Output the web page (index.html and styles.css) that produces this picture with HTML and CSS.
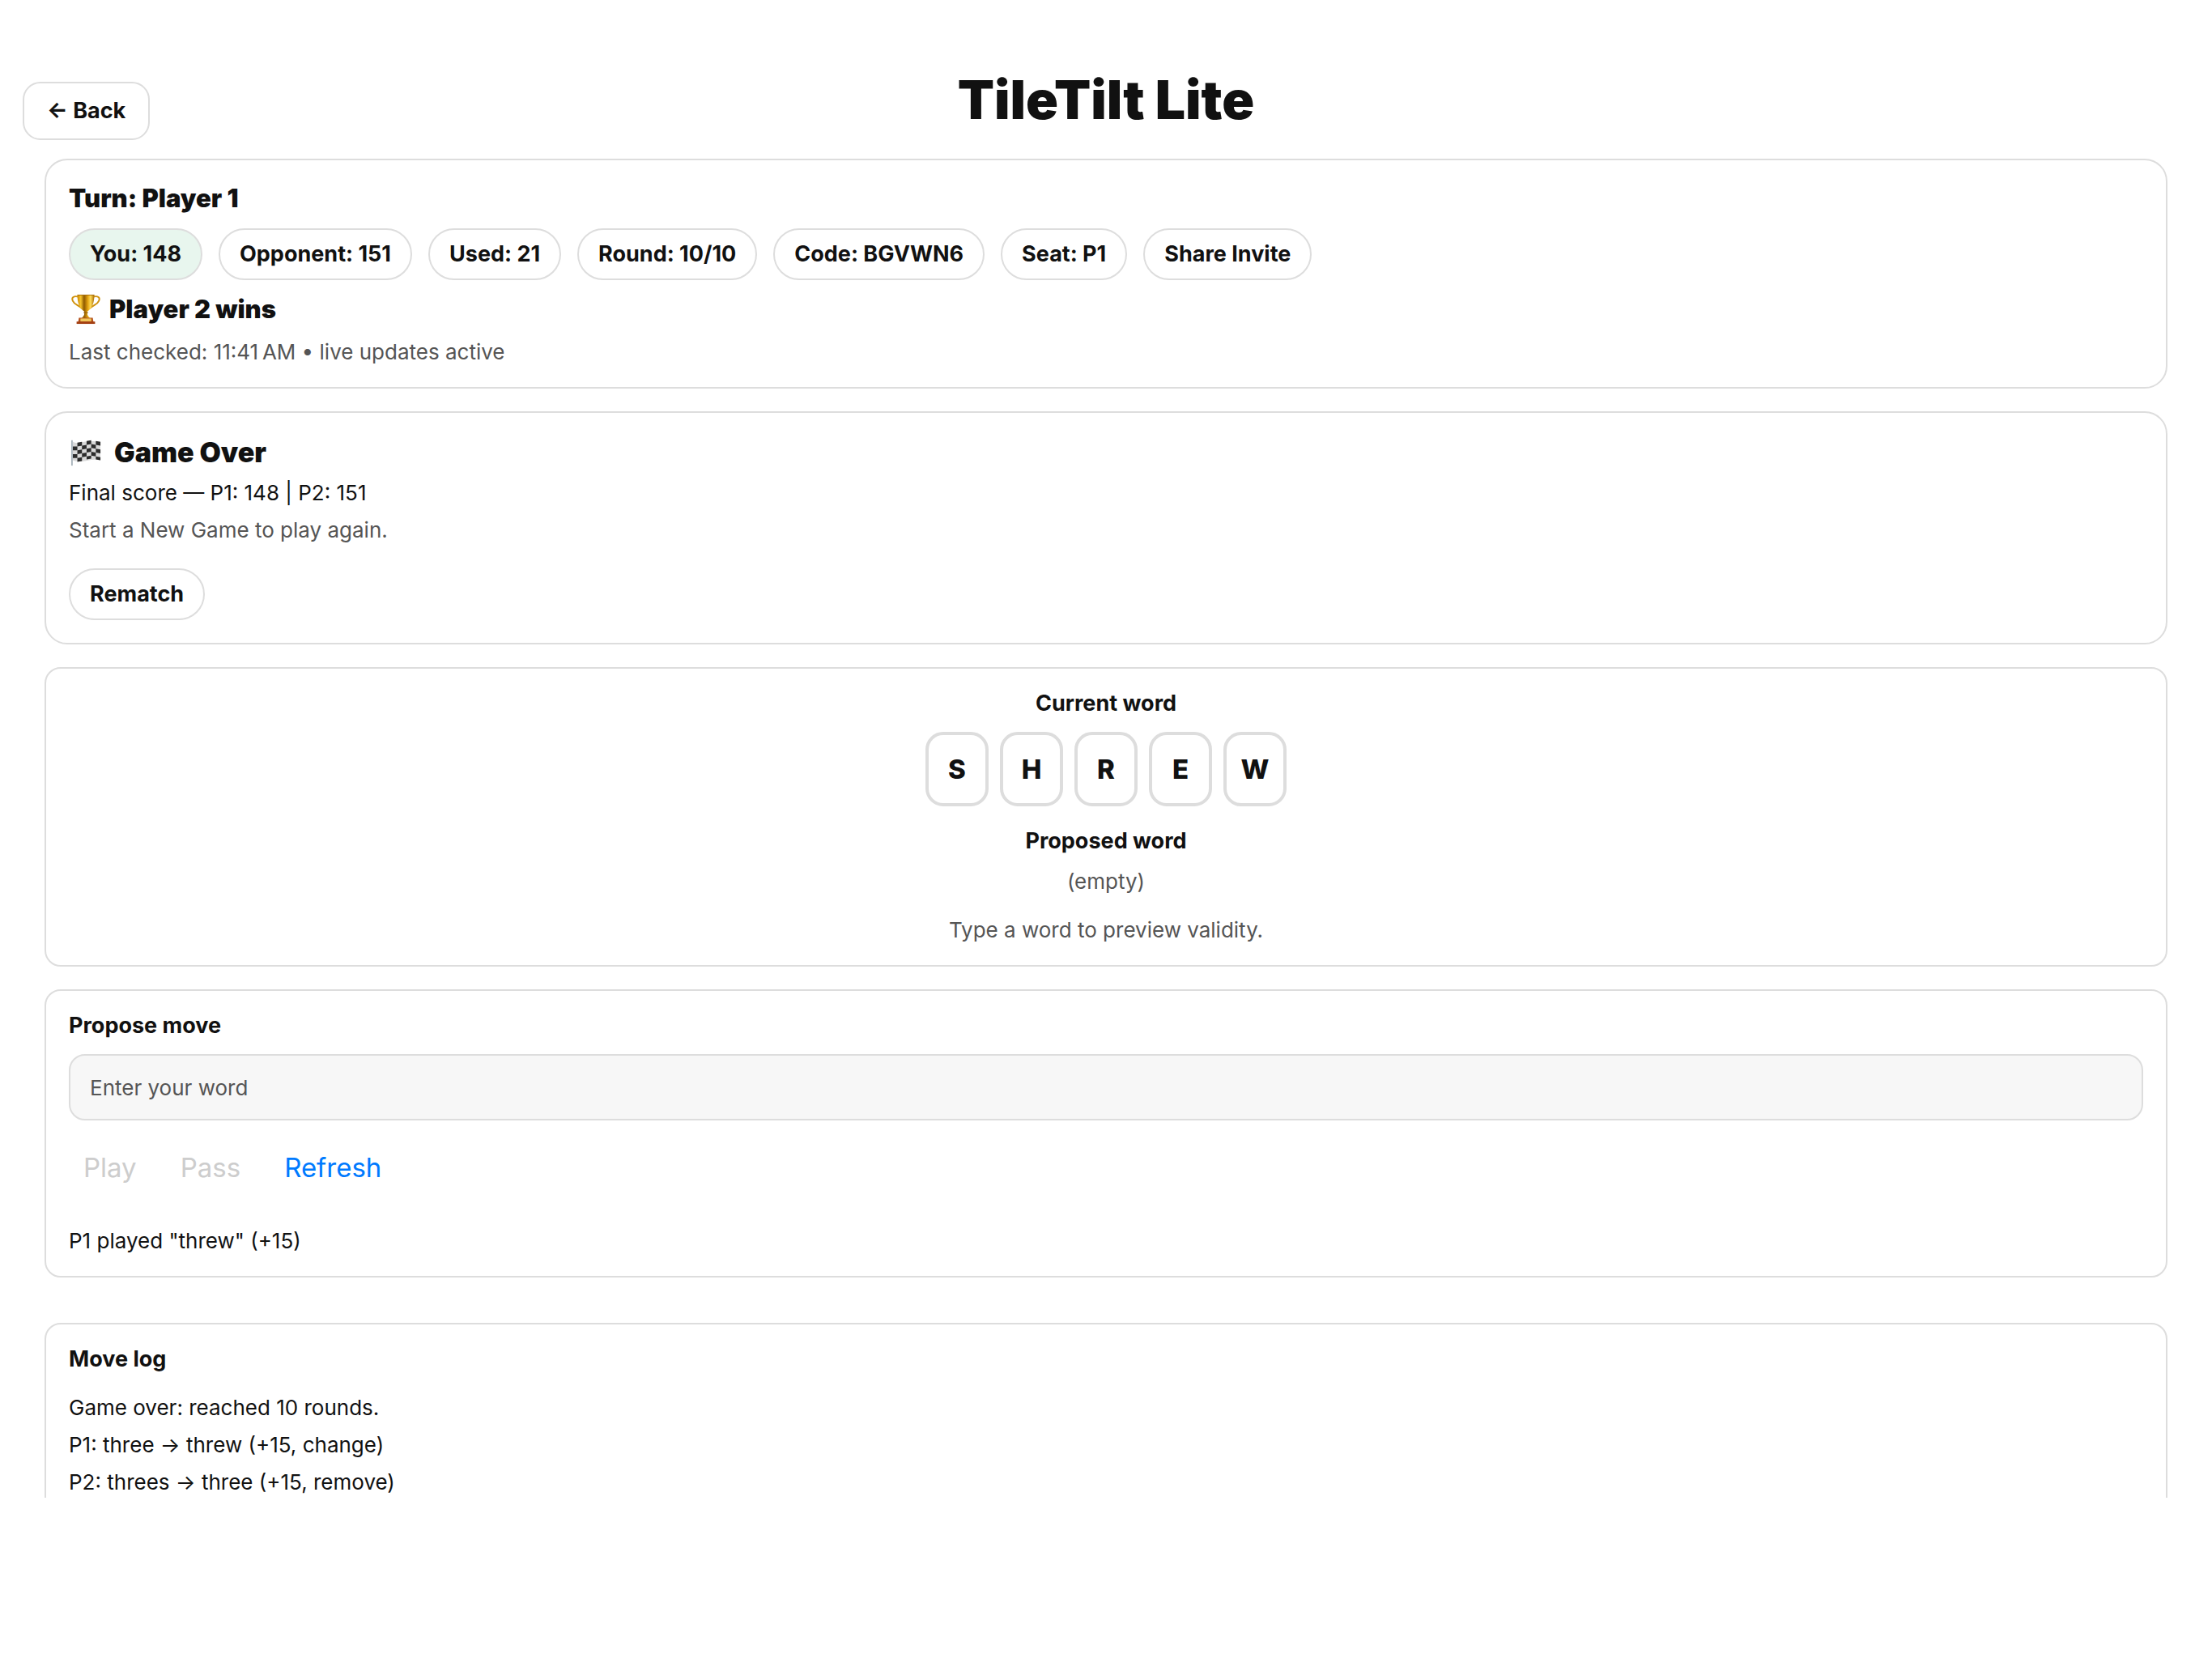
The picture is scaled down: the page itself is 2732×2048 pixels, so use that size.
FILE: index.html
```html
<!DOCTYPE html>
<html lang="en">
<head>
  <meta charset="UTF-8">
  <meta name="viewport" content="width=device-width, initial-scale=1">
  <title>TileTilt Lite</title>
  <link rel="stylesheet" href="styles.css">
</head>
<body>
  <header class="header">
    <button class="back" type="button">← Back</button>
    <h1>TileTilt Lite</h1>
  </header>

  <main class="scroll">
    <section class="card card-large">
      <h2 class="turn">Turn: Player 1</h2>
      <div class="pills">
        <span class="pill pill-you">You: 148</span>
        <span class="pill">Opponent: 151</span>
        <span class="pill">Used: 21</span>
        <span class="pill">Round: 10/10</span>
        <span class="pill">Code: BGVWN6</span>
        <span class="pill">Seat: P1</span>
        <button class="pill" type="button">Share Invite</button>
      </div>
      <p class="winner">
        <svg class="icon" viewBox="0 0 40 40" aria-hidden="true">
          <defs>
            <linearGradient id="gold">
              <stop offset="0" stop-color="#c98500"/>
              <stop offset=".2" stop-color="#f7c52e"/>
              <stop offset=".4" stop-color="#8f5a00"/>
              <stop offset=".62" stop-color="#e5a512"/>
              <stop offset=".78" stop-color="#ffdc5c"/>
              <stop offset="1" stop-color="#a96b00"/>
            </linearGradient>
          </defs>
          <path d="M11 4C4 2 1 5 3 9c2 5 7 5 12 10M29 4c7-2 10 1 8 5-2 5-7 5-12 10" fill="none" stroke="#cf910d" stroke-width="2"/>
          <path d="M9 1h22c0 10-2 17-9 22v3c0 2 2 4 4 6H14c2-2 4-4 4-6v-3C11 18 9 11 9 1z" fill="url(#gold)"/>
          <path d="M9 1h22v1H9z" fill="#a86c05"/>
          <path d="M17 24h6v1h-6z" fill="#8f5a00"/>
          <path d="M11 31h18l1 6H10z" fill="#b4531c"/>
          <path d="M13 32h14v4H13z" fill="#f0c75c"/>
          <path d="M8 36h24v3H8z" fill="#a33f12"/>
        </svg>
        Player 2 wins
      </p>
      <p class="muted checked">Last checked: 11:41&#8239;AM • live updates active</p>
    </section>

    <section class="card card-large">
      <h2 class="over">
        <svg class="icon" viewBox="0 0 40 40" aria-hidden="true">
          <path d="M3 6c8 4 14-3 36 0v24c-14-3-24 5-36 0z" fill="#d9d9d9"/>
          <g fill="#2c2c2c">
            <path d="M9 7l6-1v5l-6 1zM21 5l6-1v5l-6 1zM33 5l6 1v5l-6-1z"/>
            <path d="M3 12h6v5H3zM15 11l6-1v5l-6 1zM27 9l6 1v5l-6-1z"/>
            <path d="M9 17l6-1v5l-6 1zM21 15l6-1v5l-6 1zM33 15l6 1v5l-6-1z"/>
            <path d="M3 22h6v5H3zM15 21l6-1v5l-6 1zM27 19l6 1v5l-6-1z"/>
            <path d="M9 27l6-1v5l-6 1zM21 25l6-1v4l-6 1zM33 25l6 1v4l-6-1z"/>
          </g>
          <path d="M1 4h2v33H1z" fill="#a9b4bc"/>
        </svg>
        Game Over
      </h2>
      <p class="score">Final score — P1: 148 | P2: 151</p>
      <p class="muted hint">Start a New Game to play again.</p>
      <button class="pill rematch" type="button">Rematch</button>
    </section>

    <section class="card board">
      <h3>Current word</h3>
      <div class="tiles">
        <span class="tile">S</span>
        <span class="tile">H</span>
        <span class="tile">R</span>
        <span class="tile">E</span>
        <span class="tile">W</span>
      </div>
      <h3>Proposed word</h3>
      <p class="muted proposed">(empty)</p>
      <p class="muted preview">Type a word to preview validity.</p>
    </section>

    <section class="card">
      <h3><label for="word">Propose move</label></h3>
      <input class="word" type="text" id="word" placeholder="Enter your word">
      <div class="actions">
        <button type="button" disabled>Play</button>
        <button type="button" disabled>Pass</button>
        <button type="button">Refresh</button>
      </div>
      <p class="last-move">P1 played "threw" (+15)</p>
    </section>

    <section class="card log">
      <h3>Move log</h3>
      <ul>
        <li>Game over: reached 10 rounds.</li>
        <li>P1: three → threw (+15, change)</li>
        <li>P2: threes → three (+15, remove)</li>
      </ul>
    </section>
  </main>
</body>
</html>
```

FILE: styles.css
```css
* {
  box-sizing: border-box;
}
body {
  margin: 0;
  height: 100vh;
  padding-bottom: 198px;
  display: flex;
  flex-direction: column;
  background: #fff;
  color: #111;
  font-family: Inter, "Liberation Sans", sans-serif;
  font-size: 26px;
  line-height: 30px;
}
h1, h2, h3, p, ul {
  margin: 0;
}
button, input {
  font: inherit;
  color: inherit;
}
button {
  cursor: pointer;
}

/* header */
.header {
  display: grid;
  grid-template-columns: 1fr auto 1fr;
  grid-template-rows: 90px;
  padding: 83px 28px 23px;
}
.header h1 {
  font-size: 66px;
  font-weight: 900;
  line-height: 80px;
}
.back {
  align-self: end;
  justify-self: start;
  height: 72px;
  padding: 0 28px;
  border: 2px solid #ddd;
  border-radius: 22px;
  background: #fff;
  font-size: 27px;
  font-weight: 700;
}

/* cards */
.scroll {
  flex: 1;
  min-height: 0;
  overflow: hidden;
  padding: 0 55px;
}
.card {
  padding: 28px;
  margin-bottom: 28px;
  border: 2px solid #ddd;
  border-radius: 20px;
}
.card-large {
  border-radius: 28px;
}
h3 {
  font-size: 27px;
  font-weight: 700;
}
.muted {
  color: #555;
}
.icon {
  width: 38px;
  height: 38px;
  margin-left: 2px;
}

/* status */
.turn {
  font-size: 31px;
  font-weight: 900;
  line-height: 38px;
}
.pills {
  display: flex;
  flex-wrap: wrap;
  gap: 20px;
  margin-top: 18px;
}
.pill {
  height: 64px;
  padding: 0 24px;
  border: 2px solid #ddd;
  border-radius: 32px;
  background: #fff;
  font-size: 27px;
  font-weight: 700;
  line-height: 60px;
}
.pill-you {
  background: #e8f6ee;
}
.winner, .over {
  display: flex;
  align-items: center;
}
.winner {
  gap: 10px;
  margin-top: 14px;
  font-size: 31px;
  font-weight: 900;
  line-height: 44px;
}
.checked {
  margin-top: 16px;
}

/* game over */
.over {
  gap: 16px;
  font-size: 34px;
  font-weight: 900;
  line-height: 42px;
}
.score {
  margin-top: 14px;
}
.hint {
  margin-top: 16px;
}
.rematch {
  display: block;
  margin-top: 32px;
}

/* words */
.board {
  text-align: center;
}
.tiles {
  display: flex;
  justify-content: center;
  gap: 14px;
  margin: 20px 0 28px;
}
.tile {
  width: 78px;
  height: 92px;
  border: 4px solid #ddd;
  border-radius: 22px;
  font-size: 33px;
  font-weight: 800;
  line-height: 84px;
}
.proposed {
  margin-top: 20px;
}
.preview {
  margin-top: 30px;
}

/* move form */
.word {
  display: block;
  width: 100%;
  height: 82px;
  margin-top: 20px;
  padding: 0 24px;
  border: 2px solid #ddd;
  border-radius: 20px;
  background: #f7f7f7;
}
.word::placeholder {
  color: #555;
}
.actions {
  display: flex;
  gap: 18px;
  margin-top: 20px;
}
.actions button {
  padding: 18px;
  border: none;
  background: none;
  color: #007aff;
  font-size: 33px;
  line-height: 40px;
}
.actions button:disabled {
  color: #cdcdcd;
  cursor: default;
}
.last-move {
  margin-top: 38px;
}

/* log */
.log {
  margin-top: 56px;
  padding-bottom: 60px;
}
.log ul {
  margin-top: 22px;
  padding: 0;
  list-style: none;
}
.log li {
  line-height: 46px;
}
```
